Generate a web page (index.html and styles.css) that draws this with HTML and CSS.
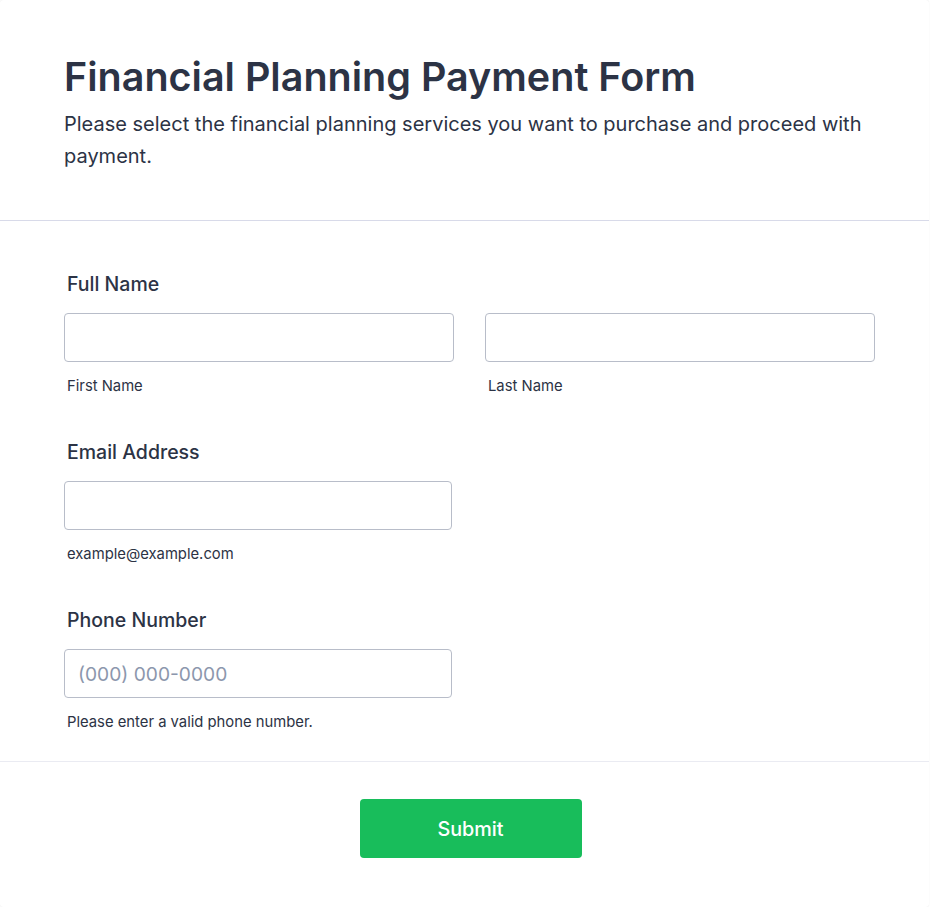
FILE: index.html
```html
<!DOCTYPE html>
<html lang="en">
<head>
<meta charset="utf-8">
<title>Financial Planning Payment Form</title>
<link rel="stylesheet" href="styles.css">
</head>
<body>
<form class="card">
  <header class="head">
    <h1 class="title">Financial Planning Payment Form</h1>
    <p class="subtitle">Please select the financial planning services you want to purchase and proceed with payment.</p>
  </header>
  <div class="fields">
    <div class="field">
      <label class="label">Full Name</label>
      <div class="name-row">
        <div class="col">
          <input class="input" type="text">
          <span class="sublabel">First Name</span>
        </div>
        <div class="col">
          <input class="input" type="text">
          <span class="sublabel">Last Name</span>
        </div>
      </div>
    </div>
    <div class="field">
      <label class="label">Email Address</label>
      <div class="col single">
        <input class="input" type="email">
        <span class="sublabel">example@example.com</span>
      </div>
    </div>
    <div class="field">
      <label class="label">Phone Number</label>
      <div class="col single">
        <input class="input" type="tel" placeholder="(000) 000-0000">
        <span class="sublabel">Please enter a valid phone number.</span>
      </div>
    </div>
  </div>
  <div class="foot">
    <button class="submit" type="button">Submit</button>
  </div>
</form>
</body>
</html>
```

FILE: styles.css
```css
html, body {
  margin: 0;
  padding: 0;
  background: #ffffff;
}
body {
  font-family: Inter, "Noto Sans", sans-serif;
  color: #2c3345;
}
.card {
  width: 929px;
  height: 907px;
  box-sizing: border-box;
  background: #fff;
  border-radius: 3px;
  box-shadow: 0 0 1px rgba(0, 0, 0, 0.12);
  display: flex;
  flex-direction: column;
}
.head {
  padding: 53px 54px 48px 64px;
  border-bottom: 1px solid #d8dae9;
}
.title {
  margin: 0;
  font-size: 39.5px;
  line-height: 48px;
  font-weight: 600;
  color: #2c3345;
}
.subtitle {
  margin: 7px 0 0;
  font-size: 20px;
  line-height: 32px;
  font-weight: 400;
  color: #2c3345;
}
.fields {
  padding: 51px 54px 30px 64px;
  border-bottom: 1px solid #eaebf2;
  display: flex;
  flex-direction: column;
  gap: 45px;
}
.field {
  display: flex;
  flex-direction: column;
}
.label {
  font-size: 19.5px;
  line-height: 24px;
  font-weight: 500;
  padding-left: 3px;
  margin-bottom: 17px;
}
.name-row {
  display: grid;
  grid-template-columns: 390px 390px;
  column-gap: 31px;
}
.col {
  display: flex;
  flex-direction: column;
}
.col.single {
  width: 388px;
}
.input {
  box-sizing: border-box;
  height: 49px;
  width: 100%;
  border: 1px solid #b8bdc9;
  border-radius: 4px;
  padding: 0 13px;
  font-family: inherit;
  font-size: 19.2px;
  color: #2c3345;
  background: #fff;
  outline: none;
}
.input::placeholder {
  color: #8c97ad;
}
.sublabel {
  margin-top: 15px;
  font-size: 14.8px;
  line-height: 18px;
  padding-left: 3px;
  color: #2c3345;
}
.foot {
  display: flex;
  justify-content: center;
  padding-top: 37px;
  padding-left: 12px;
}
.submit {
  width: 222px;
  height: 59px;
  border: none;
  border-radius: 4px;
  background: #18bd5b;
  color: #fff;
  font-family: inherit;
  font-size: 19.8px;
  font-weight: 500;
  cursor: pointer;
}
```
